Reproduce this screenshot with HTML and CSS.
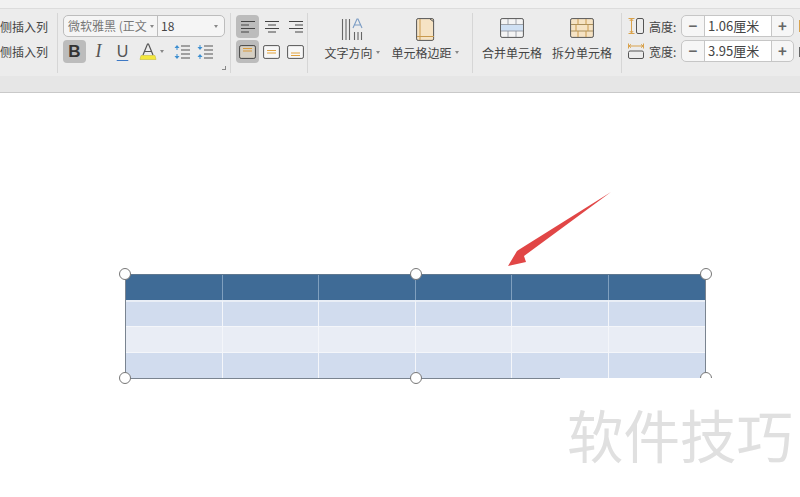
FILE: index.html
```html
<!DOCTYPE html>
<html lang="zh-CN">
<head>
    <meta charset="UTF-8">
    <title>表格工具</title>
    <link rel="stylesheet" href="styles.css">
</head>
<body>

<div class="ribbon">
    <!-- 插入列 -->
    <div class="group group-insert">
        <div class="insert-label">侧插入列</div>
        <div class="insert-label">侧插入列</div>
    </div>

    <!-- 字体 -->
    <div class="group group-font">
        <div class="font-combo">
            <div class="font-name">微软雅黑 (正文<span class="caret"></span></div>
            <div class="font-size">18<span class="caret"></span></div>
        </div>
        <div class="font-tools">
            <div class="tool tool-on tool-bold">B</div>
            <div class="tool tool-italic">I</div>
            <div class="tool tool-under">U</div>
            <div class="tool tool-color">
                <svg width="20" height="18" viewBox="0 0 20 18"><path d="M5 12 9.500 1h1L15 12M6.500 8.500h7" fill="none" stroke="#555" stroke-width="1.200"/><path d="M3 12.500h14l1 4H2z" fill="#f4e83c" stroke="#c9bd3a" stroke-width=".6"/></svg>
            </div>
            <span class="caret caret-color"></span>
            <div class="tool">
                <svg width="18" height="16" viewBox="0 0 18 16"><path d="M8 2h9M8 6h9M8 10h9M8 14h9" stroke="#555" stroke-width="1.100"/><path d="M4 1 1.500 4h5zM4 15l-2.500-3h5z" fill="#3d8fd1"/><path d="M4 4v2M4 10v2" stroke="#3d8fd1"/></svg>
            </div>
            <div class="tool">
                <svg width="18" height="16" viewBox="0 0 18 16"><path d="M8 2h9M8 6h9M8 10h9M8 14h9" stroke="#555" stroke-width="1.100"/><path d="M4 6 1.500 3h5zM4 10l-2.500 3h5z" fill="#3d8fd1"/><path d="M4 1v2M4 13v2" stroke="#3d8fd1"/></svg>
            </div>
        </div>
        <span class="corner"></span>
    </div>

    <!-- 对齐 -->
    <div class="group group-align">
        <div class="tool tool-on">
            <svg width="16" height="14" viewBox="0 0 16 14"><path d="M1 1.500h14M1 5h8M1 8.500h14M1 12h8" stroke="#444" stroke-width="1.200"/></svg>
        </div>
        <div class="tool">
            <svg width="16" height="14" viewBox="0 0 16 14"><path d="M1 1.500h14M4 5h8M1 8.500h14M4 12h8" stroke="#444" stroke-width="1.200"/></svg>
        </div>
        <div class="tool">
            <svg width="16" height="14" viewBox="0 0 16 14"><path d="M1 1.500h14M7 5h8M1 8.500h14M7 12h8" stroke="#444" stroke-width="1.200"/></svg>
        </div>
        <div class="tool tool-on">
            <svg width="17" height="14" viewBox="0 0 17 14"><rect x=".6" y=".6" width="15.800" height="12.800" rx="1.500" fill="#d6d0c4" stroke="#444"/><path d="M4 3.500h9M4 6h9" stroke="#d99a3a" stroke-width="1.100"/></svg>
        </div>
        <div class="tool">
            <svg width="17" height="14" viewBox="0 0 17 14"><rect x=".6" y=".6" width="15.800" height="12.800" rx="1.500" fill="#f7f7f7" stroke="#555"/><path d="M4 5.500h9M4 8h9" stroke="#e2a33f" stroke-width="1.100"/></svg>
        </div>
        <div class="tool">
            <svg width="17" height="14" viewBox="0 0 17 14"><rect x=".6" y=".6" width="15.800" height="12.800" rx="1.500" fill="#f7f7f7" stroke="#555"/><path d="M4 8h9M4 10.500h9" stroke="#e2a33f" stroke-width="1.100"/></svg>
        </div>
    </div>

    <!-- 文字方向 / 边距 -->
    <div class="group group-big group-text">
        <div class="big-btn btn-direction">
            <svg width="22" height="22" viewBox="0 0 22 22"><path d="M1.500 1v21M5 1v21M8.500 1v21" stroke="#666" stroke-width="1.100"/><path d="M12 10 16 1h1l4 9M13.500 7h6" fill="none" stroke="#7b9cc4" stroke-width="1.100"/><path d="M13.500 14v8M17 14v8M20.500 14v8" stroke="#666" stroke-width="1.100"/></svg>
            <span class="big-label">文字方向<span class="caret"></span></span>
        </div>
        <div class="big-btn btn-margin">
            <svg width="19" height="23" viewBox="0 0 19 23"><rect x=".6" y=".6" width="17" height="21.800" rx="1.500" fill="#f6e3c4" stroke="#555"/><path d="M4 1v21M1 18.500h17" stroke="#c99a4e"/><path d="M14 1l4 3" stroke="#555"/></svg>
            <span class="big-label">单元格边距<span class="caret"></span></span>
        </div>
    </div>

    <!-- 合并 / 拆分 -->
    <div class="group group-big group-merge">
        <div class="big-btn btn-cell">
            <svg width="24" height="20" viewBox="0 0 24 20"><rect x=".6" y=".6" width="22.800" height="18.800" rx="1.500" fill="#f4f4f4" stroke="#555"/><rect x="1" y="7" width="22" height="6" fill="#cfe0f3"/><path d="M1 6.500h22M1 13h22M8 1v5.500M16 1v5.500M8 13v6M16 13v6" stroke="#8a9199" stroke-width=".8"/></svg>
            <span class="big-label">合并单元格</span>
        </div>
        <div class="big-btn btn-cell">
            <svg width="24" height="20" viewBox="0 0 24 20"><rect x=".6" y=".6" width="22.800" height="18.800" rx="1.500" fill="#f6e3c4" stroke="#555"/><path d="M1 6.500h22M1 13h22" stroke="#a08650" stroke-width=".9"/><path d="M8 1v5.500M16 1v5.500M6 6.500V13M18 6.500V13M8 13v6M16 13v6" stroke="#c99a4e"/></svg>
            <span class="big-label">拆分单元格</span>
        </div>
    </div>

    <!-- 高度 / 宽度 -->
    <div class="group group-size">
        <div class="size-row">
            <svg class="size-icon" width="16" height="16" viewBox="0 0 16 16"><path d="M.500.500h6M.500 15.500h6M3.500 1v14M1.800 3 3.500 1l1.700 2M1.800 13l1.700 2 1.700-2" fill="none" stroke="#d9a24c"/><rect x="8.500" y=".5" width="7" height="15" rx="1.500" fill="none" stroke="#555"/></svg>
            <span class="size-label">高度:</span>
            <div class="spinner"><span class="spin-btn">−</span><span class="spin-value">1.06厘米</span><span class="spin-btn spin-plus">+</span></div>
        </div>
        <div class="size-row">
            <svg class="size-icon" width="16" height="16" viewBox="0 0 16 16"><path d="M.500.500v5M15.500.500v5M1 3h14M3 1.300 1 3l2 1.700M13 1.300 15 3l-2 1.700" fill="none" stroke="#d9a24c"/><rect x=".5" y="8" width="15" height="7.500" rx="1.500" fill="none" stroke="#555"/></svg>
            <span class="size-label">宽度:</span>
            <div class="spinner"><span class="spin-btn">−</span><span class="spin-value">3.95厘米</span><span class="spin-btn spin-plus">+</span></div>
        </div>
    </div>
    <span class="next-edge"></span>
    <span class="next-edge next-edge-dark"></span>
</div>

<div class="gap-band"></div>

<div class="slide">
    <svg class="arrow" width="110" height="80" viewBox="0 0 110 80">
        <polygon points="105,1 14,58 11,60 2,75 20,71 18,65" fill="#e14646"/>
    </svg>

    <div class="table-frame">
        <table class="slide-table">
            <tr class="row-head"><td></td><td></td><td></td><td></td><td></td><td></td></tr>
            <tr class="row-dark"><td></td><td></td><td></td><td></td><td></td><td></td></tr>
            <tr class="row-light"><td></td><td></td><td></td><td></td><td></td><td></td></tr>
            <tr class="row-dark"><td></td><td></td><td></td><td></td><td></td><td></td></tr>
        </table>
    </div>

    <span class="handle h-tl"></span>
    <span class="handle h-tm"></span>
    <span class="handle h-tr"></span>
    <span class="handle h-bl"></span>
    <span class="handle h-bm"></span>
    <span class="handle h-br"></span>

    <!-- 水印盖住了右下角 -->
    <div class="watermark">软件技巧</div>
</div>

</body>
</html>
```

FILE: styles.css
```css
html, body {
    margin: 0;
    padding: 0;
}
body {
    width: 800px;
    height: 497px;
    overflow: hidden;
    background-color: #fff;
    font-family: "Noto Sans CJK SC", "Noto Sans", sans-serif;
    font-size: 12px;
    color: #444;
}
.ribbon {
    display: flex;
    height: 67px;
    box-sizing: content-box;
    padding-top: 9px;
    background-color: #ececec;
    box-shadow: inset 0 8px 0 #f1f1f1, inset 0 9px 0 #dcdcdc;
    overflow: hidden;
    position: relative;
}
.group {
    box-sizing: border-box;
    height: 60px;
    margin-top: 4px;
    border-right: 1px solid #d6d6d6;
    flex-shrink: 0;
}
.group-insert {
    width: 58px;
    padding-top: 1px;
}
.insert-label {
    height: 25px;
    line-height: 25px;
    text-align: right;
    padding-right: 9px;
    white-space: nowrap;
    overflow: hidden;
}
.group-font {
    width: 173px;
    padding: 2px 0 0 5px;
    position: relative;
}
.font-combo {
    display: flex;
    width: 162px;
    height: 22px;
    box-sizing: border-box;
    border: 1px solid #bdbdbd;
    border-radius: 5px;
    background-color: #f5f5f5;
    line-height: 20px;
}
.font-name {
    width: 94px;
    padding-left: 4px;
    box-sizing: border-box;
    border-right: 1px solid #bdbdbd;
    white-space: nowrap;
    color: #777;
    display: flex;
    align-items: center;
}
.font-size {
    flex: 1;
    padding-left: 3px;
    display: flex;
    align-items: center;
    justify-content: space-between;
    padding-right: 6px;
}
.caret {
    display: inline-block;
    width: 0;
    height: 0;
    margin-left: 3px;
    border-left: 2.500px solid transparent;
    border-right: 2.500px solid transparent;
    border-top: 3px solid #888;
}
.font-tools {
    display: flex;
    align-items: center;
    margin-top: 3px;
}
.tool {
    width: 23px;
    height: 23px;
    display: flex;
    align-items: center;
    justify-content: center;
    border-radius: 4px;
    flex-shrink: 0;
}
.tool-on {
    background-color: #bcbcbc;
}
.tool-bold {
    font-family: "Liberation Sans", sans-serif;
    font-weight: bold;
    font-size: 17px;
    color: #333;
}
.tool-italic {
    margin-left: 1px;
    font-family: "Liberation Serif", serif;
    font-style: italic;
    font-size: 18px;
    color: #555;
}
.tool-under {
    margin-left: 1px;
    font-family: "Liberation Sans", sans-serif;
    font-size: 16px;
    color: #555;
    text-decoration: underline;
    text-decoration-color: #3d78c4;
    text-underline-offset: 3px;
}
.tool-color {
    margin-left: 2px;
}
.caret-color {
    margin: 0 6px 0 1px;
}
.corner {
    position: absolute;
    right: 4px;
    bottom: 3px;
    width: 3px;
    height: 3px;
    border-right: 1px solid #888;
    border-bottom: 1px solid #888;
}
.group-align {
    width: 77px;
    padding: 2px 0 0 5px;
    display: grid;
    grid-template-columns: repeat(3, 23px);
    grid-auto-rows: 23px;
    column-gap: 1px;
    row-gap: 2px;
}
.group-big {
    display: flex;
    border-right: 1px solid #d6d6d6;
}
.big-btn {
    display: flex;
    flex-direction: column;
    align-items: center;
    justify-content: space-between;
    padding-top: 5px;
    height: 48px;
    box-sizing: border-box;
}
.big-label {
    white-space: nowrap;
    line-height: 17px;
    display: flex;
    align-items: center;
}
.group-text {
    width: 165px;
    padding-left: 11px;
    box-sizing: border-box;
}
.btn-direction {
    width: 66px;
}
.btn-margin {
    width: 68px;
    margin-left: 6px;
}
.group-merge {
    width: 149px;
    padding-left: 4px;
    box-sizing: border-box;
}
.btn-cell {
    width: 70px;
}
.group-size {
    width: 178px;
    border-right: 0;
    padding: 2px 0 0 6px;
}
.size-row {
    display: flex;
    align-items: center;
    height: 22px;
    margin-bottom: 3px;
}
.size-icon {
    flex-shrink: 0;
}
.size-label {
    width: 37px;
    padding-left: 5px;
    box-sizing: border-box;
    white-space: nowrap;
}
.spinner {
    display: flex;
    width: 113px;
    height: 22px;
    box-sizing: border-box;
    border: 1px solid #c6c6c6;
    border-radius: 5px;
    background-color: #f6f6f6;
    line-height: 20px;
}
.spin-btn {
    width: 22px;
    text-align: center;
    font-size: 15px;
    font-weight: bold;
    color: #666;
}
.spin-plus {
    width: 21px;
}
.spin-value {
    flex: 1;
    padding-left: 3px;
    font-size: 13px;
    background-color: #fff;
    border-left: 1px solid #c6c6c6;
    border-right: 1px solid #c6c6c6;
    white-space: nowrap;
}
.next-edge {
    position: absolute;
    left: 799px;
    top: 20px;
    width: 1px;
    height: 12px;
    background-color: #d9a24c;
}
.next-edge-dark {
    top: 47px;
    height: 10px;
    background-color: #666;
}
.gap-band {
    height: 16px;
    background-color: #e6e6e6;
    border-bottom: 1px solid #c9c9c9;
}
.slide {
    position: relative;
    height: 404px;
    margin-left: 1px;
    background-color: #fff;
}
.table-frame {
    position: absolute;
    left: 124px;
    top: 181px;
    width: 581px;
    height: 105px;
    box-sizing: border-box;
    border: 1px solid #7a8490;
    border-top-color: #5f7890;
}
.slide-table {
    width: 100%;
    border-collapse: separate;
    border-spacing: 0;
    table-layout: fixed;
}
.slide-table td {
    height: 25px;
    padding: 0;
    border-right: 1px solid #f4f6fa;
    border-top: 1px solid #f4f6fa;
}
.slide-table td:last-child {
    border-right: 0;
}
.row-head td {
    background-color: #3f6b96;
    border-right-color: #7f9fbe;
    border-top: 0;
}
.row-dark td {
    background-color: #d1dcee;
}
.row-head + .row-dark td {
    height: 24px;
    border-top: 2px solid #e9eef6;
}
.row-light td {
    background-color: #e9edf5;
}
.handle {
    position: absolute;
    width: 12px;
    height: 12px;
    box-sizing: border-box;
    background-color: #fff;
    border: 1px solid #777;
    border-radius: 50%;
}
.h-tl { left: 118px; top: 175px; }
.h-tm { left: 409px; top: 175px; }
.h-tr { left: 699px; top: 175px; }
.h-bl { left: 118px; top: 279px; }
.h-bm { left: 409px; top: 279px; }
.h-br { left: 699px; top: 279px; }
.arrow {
    position: absolute;
    left: 505px;
    top: 98px;
}
.watermark {
    position: absolute;
    left: 559px;
    top: 285px;
    width: 240px;
    height: 119px;
    padding: 20px 0 0 7px;
    box-sizing: border-box;
    background-color: #fff;
    font-size: 56.500px;
    line-height: 70px;
    white-space: nowrap;
    color: #e0e0e0;
}
```
